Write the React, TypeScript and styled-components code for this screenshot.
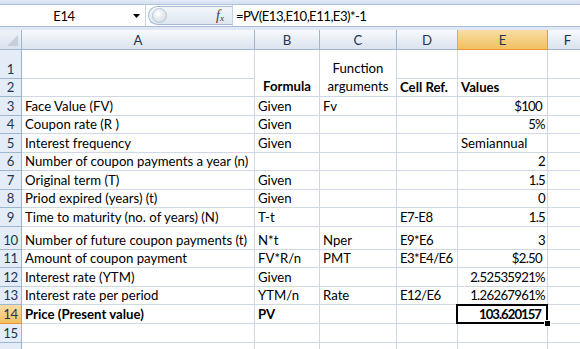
import React from 'react'
import styled, {createGlobalStyle, css} from 'styled-components'

const GlobalStyle = createGlobalStyle`
  html, body {
    margin: 0;
    padding: 0;
    background: #ffffff;
    overflow: hidden;
  }
`

const FONT = `'Lato', 'Open Sans', sans-serif`

type Align = 'left' | 'right' | 'center'

interface Cell {
  text?: string
  align?: Align
  bold?: boolean
  pad?: number
  tight?: number
}

interface Row {
  n: number
  h: number
  label?: boolean
  cells: Cell[]
}

const COLUMNS = ['A', 'B', 'C', 'D', 'E', 'F']
const COL_WIDTHS = '22px 233px 65px 77px 61px 90px 40px'

const t = (text: string, extra: Partial<Cell> = {}): Cell => ({text, ...extra})
// Lato digits run wider than the sheet's font, so numbers are set a little tighter
const num = (text: string, extra: Partial<Cell> = {}): Cell => ({text, align: 'right', tight: 0.7, ...extra})
const ref = (text: string): Cell => ({text, tight: 0.6})
const empty: Cell = {}
const blank = [empty, empty, empty, empty, empty, empty]

// rows 1 and 2 leave out B and C, those are merged into B1:B2 and C1:C2
const ROWS: Row[] = [
  {n: 1, h: 29, cells: [empty, empty, empty, empty]},
  {n: 2, h: 18, cells: [empty, t('Cell Ref.', {bold: true}), t('Values', {bold: true}), empty]},
  {n: 3, h: 19, cells: [t('Face Value (FV)'), t('Given'), t('Fv'), empty, num('$100', {pad: 5}), empty]},
  {n: 4, h: 18, cells: [t('Coupon rate (R )'), t('Given'), empty, empty, num('5%'), empty]},
  {n: 5, h: 19, cells: [t('Interest frequency'), t('Given'), empty, empty, t('Semiannual'), empty]},
  {n: 6, h: 18, cells: [t('Number of coupon payments a year (n)'), empty, empty, empty, num('2'), empty]},
  {n: 7, h: 19, cells: [t('Original term (T)'), t('Given'), empty, empty, num('1.5'), empty]},
  {n: 8, h: 18, cells: [t('Priod expired (years) (t)'), t('Given'), empty, empty, num('0'), empty]},
  {n: 9, h: 19, cells: [t('Time to maturity (no. of years) (N)'), t('T-t'), empty, ref('E7-E8'), num('1.5'), empty]},
  {n: 10, h: 23, cells: [t('Number of future coupon payments (t)'), t('N*t'), t('Nper'), ref('E9*E6'), num('3'), empty]},
  {n: 11, h: 18, cells: [t('Amount of coupon payment'), t('FV*R/n'), t('PMT'), ref('E3*E4/E6'), num('$2.50', {pad: 5}), empty]},
  {n: 12, h: 19, cells: [t('Interest rate (YTM)'), t('Given'), empty, empty, num('2.52535921%'), empty]},
  {n: 13, h: 18, cells: [t('Interest rate per period'), t('YTM/n'), t('Rate'), ref('E12/E6'), num('1.26267961%'), empty]},
  {n: 14, h: 19, cells: [t('Price (Present value)', {bold: true}), t('PV', {bold: true}), empty, empty, num('103.620157', {bold: true, pad: 6, tight: 1}), empty]},
  {n: 15, h: 19, cells: blank},
  {n: 16, h: 19, label: false, cells: blank},
]

const SELECTED_ROW = 14
const SELECTED_COL = 'E'

function SheetRow(props: {row: Row}) {
  const {row} = props
  const isSelectedRow = row.n === SELECTED_ROW

  return (
    <>
      <RowHeader $active={isSelectedRow}>{row.label === false ? '' : row.n}</RowHeader>
      {row.n === 1 && (
        <>
          <GridCell />
          <MergedCell $bold>Formula</MergedCell>
          <MergedCell>
            Function
            <br />
            arguments
          </MergedCell>
          {row.cells.slice(1).map((_, i) => (
            <GridCell key={i} />
          ))}
        </>
      )}
      {row.n === 2 && (
        <>
          <GridCell />
          {row.cells.slice(1).map((cell, i) => (
            <GridCell key={i} $align={cell.align} $bold={cell.bold}>
              {cell.text}
            </GridCell>
          ))}
        </>
      )}
      {row.n > 2 &&
        row.cells.map((cell, i) => (
          <GridCell
            key={i}
            $align={cell.align}
            $bold={cell.bold}
            $pad={cell.pad}
            $tight={cell.tight}
            $selected={isSelectedRow && COLUMNS[i] === SELECTED_COL}
          >
            {cell.text}
          </GridCell>
        ))}
    </>
  )
}

export default function App() {
  return (
    <>
      <GlobalStyle />
      <Window>
        <RibbonEdge />
        <FormulaBar>
          <NameBox>E14</NameBox>
          <NameDrop>
            <svg width="7" height="4" viewBox="0 0 7 4">
              <path d="M0 0h7L3.5 4z" fill="#000" />
            </svg>
          </NameDrop>
          <FxPill>
            <PillKnob />
            <FxLabel>
              f<sub>x</sub>
            </FxLabel>
          </FxPill>
          <FormulaInput>=PV(E13,E10,E11,E3)*-1</FormulaInput>
        </FormulaBar>
        <BarGap />
        <Sheet $rows={ROWS.map((r) => `${r.h}px`).join(' ')}>
          <Corner>
            <svg width="11" height="11" viewBox="0 0 11 11">
              <path d="M11 0V11H0z" fill="#c6d0dc" />
            </svg>
          </Corner>
          {COLUMNS.map((c) => (
            <ColHeader key={c} $active={c === SELECTED_COL}>
              {c}
            </ColHeader>
          ))}
          {ROWS.map((row) => (
            <SheetRow key={row.n} row={row} />
          ))}
        </Sheet>
      </Window>
    </>
  )
}

const Window = styled.div`
  width: 580px;
  height: 349px;
  overflow: hidden;
  background: #ffffff;
  font-family: ${FONT};
`

const RibbonEdge = styled.div`
  height: 4px;
  background: linear-gradient(#e3ebf6, #d3def0);
  border-bottom: 1px solid #b1c3dc;
`

const FormulaBar = styled.div`
  display: flex;
  height: 21px;
  background: #ffffff;
  border-bottom: 1px solid #a8bcd8;
`

const NameBox = styled.div`
  width: 128px;
  display: flex;
  align-items: center;
  justify-content: center;
  font-size: 13px;
  letter-spacing: -0.4px;
  color: #000;
`

const NameDrop = styled.div`
  width: 17px;
  display: flex;
  align-items: center;
  justify-content: center;
  border-right: 1px solid #c5d3e6;
`

const FxPill = styled.div`
  width: 84px;
  margin: 1px 0 1px 2px;
  display: flex;
  align-items: center;
  justify-content: space-between;
  padding: 0 8px 0 3px;
  box-sizing: border-box;
  border: 1px solid #a6b9d3;
  border-right: none;
  border-radius: 10px 0 0 10px;
  background: linear-gradient(#f4f7fb, #dde6f1);
`

const PillKnob = styled.div`
  width: 13px;
  height: 13px;
  border-radius: 50%;
  background: radial-gradient(circle at 40% 35%, #ffffff, #c9d3df);
  border: 1px solid #b9c6d6;
`

const FxLabel = styled.span`
  font-family: 'Liberation Serif', serif;
  font-style: italic;
  font-size: 14px;
  color: #3c3c3c;

  sub {
    font-size: 9px;
    vertical-align: -1px;
  }
`

const FormulaInput = styled.div`
  flex: 1;
  display: flex;
  align-items: center;
  padding-left: 3px;
  border-left: 1px solid #c5d3e6;
  font-size: 13.2px;
  letter-spacing: -0.55px;
  color: #000;
`

const BarGap = styled.div`
  height: 3px;
  background: #dfe8f4;
`

const Sheet = styled.div<{$rows: string}>`
  display: grid;
  grid-template-columns: ${COL_WIDTHS};
  grid-template-rows: 20px ${(p) => p.$rows};
  font-size: 13.2px;
`

const headerBase = css`
  box-sizing: border-box;
  display: flex;
  align-items: center;
  justify-content: center;
  color: #1f3553;
  font-size: 13.2px;
`

const activeHeader = css`
  background: linear-gradient(#f9dca5, #f1c15f);
  border-color: #f29436;
`

const Corner = styled.div`
  ${headerBase};
  align-items: flex-end;
  justify-content: flex-end;
  padding: 0 3px 3px 0;
  background: linear-gradient(#eef2f8, #dbe3ee);
  border-right: 1px solid #9eb6ce;
  border-bottom: 1px solid #9eb6ce;
`

const ColHeader = styled.div<{$active?: boolean}>`
  ${headerBase};
  background: linear-gradient(#f7f9fc, #dbe3ee);
  border-right: 1px solid #9eb6ce;
  border-bottom: 1px solid #9eb6ce;
  ${(p) => p.$active && activeHeader};
`

const RowHeader = styled.div<{$active?: boolean}>`
  ${headerBase};
  background: #e4ecf7;
  border-right: 1px solid #9eb6ce;
  border-bottom: 1px solid #9eb6ce;
  align-items: flex-end;
  padding-bottom: 1px;
  letter-spacing: -0.3px;
  ${(p) => p.$active && activeHeader};
`

const GridCell = styled.div<{
  $align?: Align
  $bold?: boolean
  $pad?: number
  $tight?: number
  $selected?: boolean
}>`
  position: relative;
  box-sizing: border-box;
  display: flex;
  align-items: flex-end;
  justify-content: ${(p) =>
    p.$align === 'right' ? 'flex-end' : p.$align === 'center' ? 'center' : 'flex-start'};
  padding: 0 ${(p) => p.$pad ?? 2}px 1px 3px;
  border-right: 1px solid #d0d7e5;
  border-bottom: 1px solid #d0d7e5;
  white-space: nowrap;
  letter-spacing: ${(p) => (p.$tight ? `-${p.$tight}px` : 'normal')};
  font-weight: ${(p) => (p.$bold ? 700 : 400)};
  color: #000;

  ${(p) =>
    p.$selected &&
    css`
      &::after {
        content: '';
        position: absolute;
        left: -2px;
        top: -1px;
        right: -1px;
        bottom: -1px;
        border: 2px solid #000;
      }
      &::before {
        content: '';
        position: absolute;
        right: -4px;
        bottom: -4px;
        width: 5px;
        height: 5px;
        background: #000;
        border: 1px solid #fff;
        z-index: 1;
      }
    `};
`

const MergedCell = styled.div<{$bold?: boolean}>`
  grid-row: span 2;
  box-sizing: border-box;
  display: flex;
  align-items: flex-end;
  justify-content: center;
  text-align: center;
  padding-bottom: 1px;
  line-height: 18px;
  border-right: 1px solid #d0d7e5;
  border-bottom: 1px solid #d0d7e5;
  font-weight: ${(p) => (p.$bold ? 700 : 400)};
  color: #000;
`
